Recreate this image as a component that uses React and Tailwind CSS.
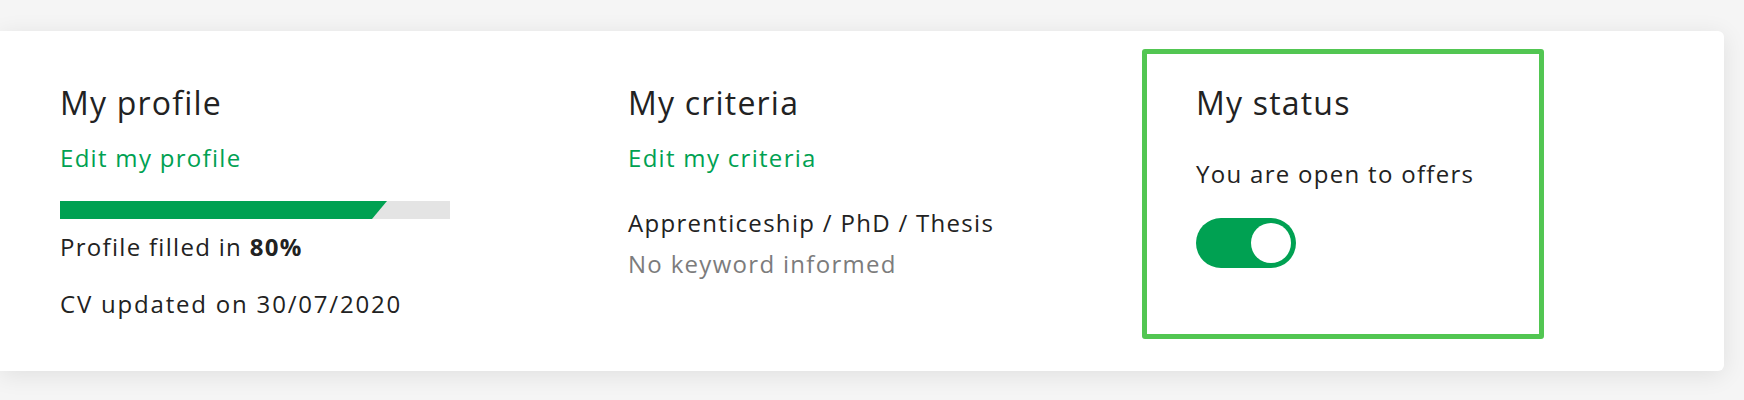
import React from "react";

export default function App() {
  const font = { fontFamily: "'Open Sans', Lato, sans-serif" };

  return (
    <div className="w-[1744px] h-[400px] bg-[#f5f5f5] pt-[31px] overflow-hidden" style={font}>
      {/* Dashboard card */}
      <div className="w-[1724px] h-[340px] bg-white rounded-r-[6px] shadow-[0_4px_24px_rgba(0,0,0,0.09)] flex items-start pt-[18px] text-[#222222] tracking-[1.3px]">
        {/* My profile */}
        <div className="w-[628px] pl-[60px] pt-[34px]">
          <h2 className="text-[32px] leading-[40px] font-medium tracking-[1.2px]">My profile</h2>
          <a className="block mt-[19px] text-[24px] leading-[32px] text-[#00a152]">Edit my profile</a>
          <div className="mt-[27px] w-[390px] h-[18px] bg-[#e4e4e4]">
            <div className="h-full w-[327px] bg-[#00a152] [clip-path:polygon(0_0,100%_0,calc(100%-15px)_100%,0_100%)]" />
          </div>
          <p className="mt-[12px] text-[24px] leading-[32px]">
            Profile filled in <span className="font-bold">80%</span>
          </p>
          <p className="mt-[25px] text-[24px] leading-[32px] tracking-[1.8px]">CV updated on 30/07/2020</p>
        </div>

        {/* My criteria */}
        <div className="w-[514px] pt-[34px]">
          <h2 className="text-[32px] leading-[40px] font-medium tracking-[1.2px]">My criteria</h2>
          <a className="block mt-[19px] text-[24px] leading-[32px] text-[#00a152]">Edit my criteria</a>
          <p className="mt-[33px] text-[24px] leading-[32px]">Apprenticeship / PhD / Thesis</p>
          <p className="mt-[9px] text-[24px] leading-[32px] text-[#7c7c7c]">No keyword informed</p>
        </div>

        {/* My status */}
        <div className="w-[402px] h-[290px] border-[5px] border-[#52c652] rounded-[3px] pl-[49px] pt-[29px]">
          <h2 className="text-[32px] leading-[40px] font-medium tracking-[1.2px]">My status</h2>
          <p className="mt-[35px] text-[24px] leading-[32px]">You are open to offers</p>
          <div className="mt-[28px] w-[100px] h-[50px] rounded-full bg-[#00a152] flex items-center justify-end pr-[5px]">
            <div className="w-[40px] h-[40px] rounded-full bg-white" />
          </div>
        </div>
      </div>
    </div>
  );
}
